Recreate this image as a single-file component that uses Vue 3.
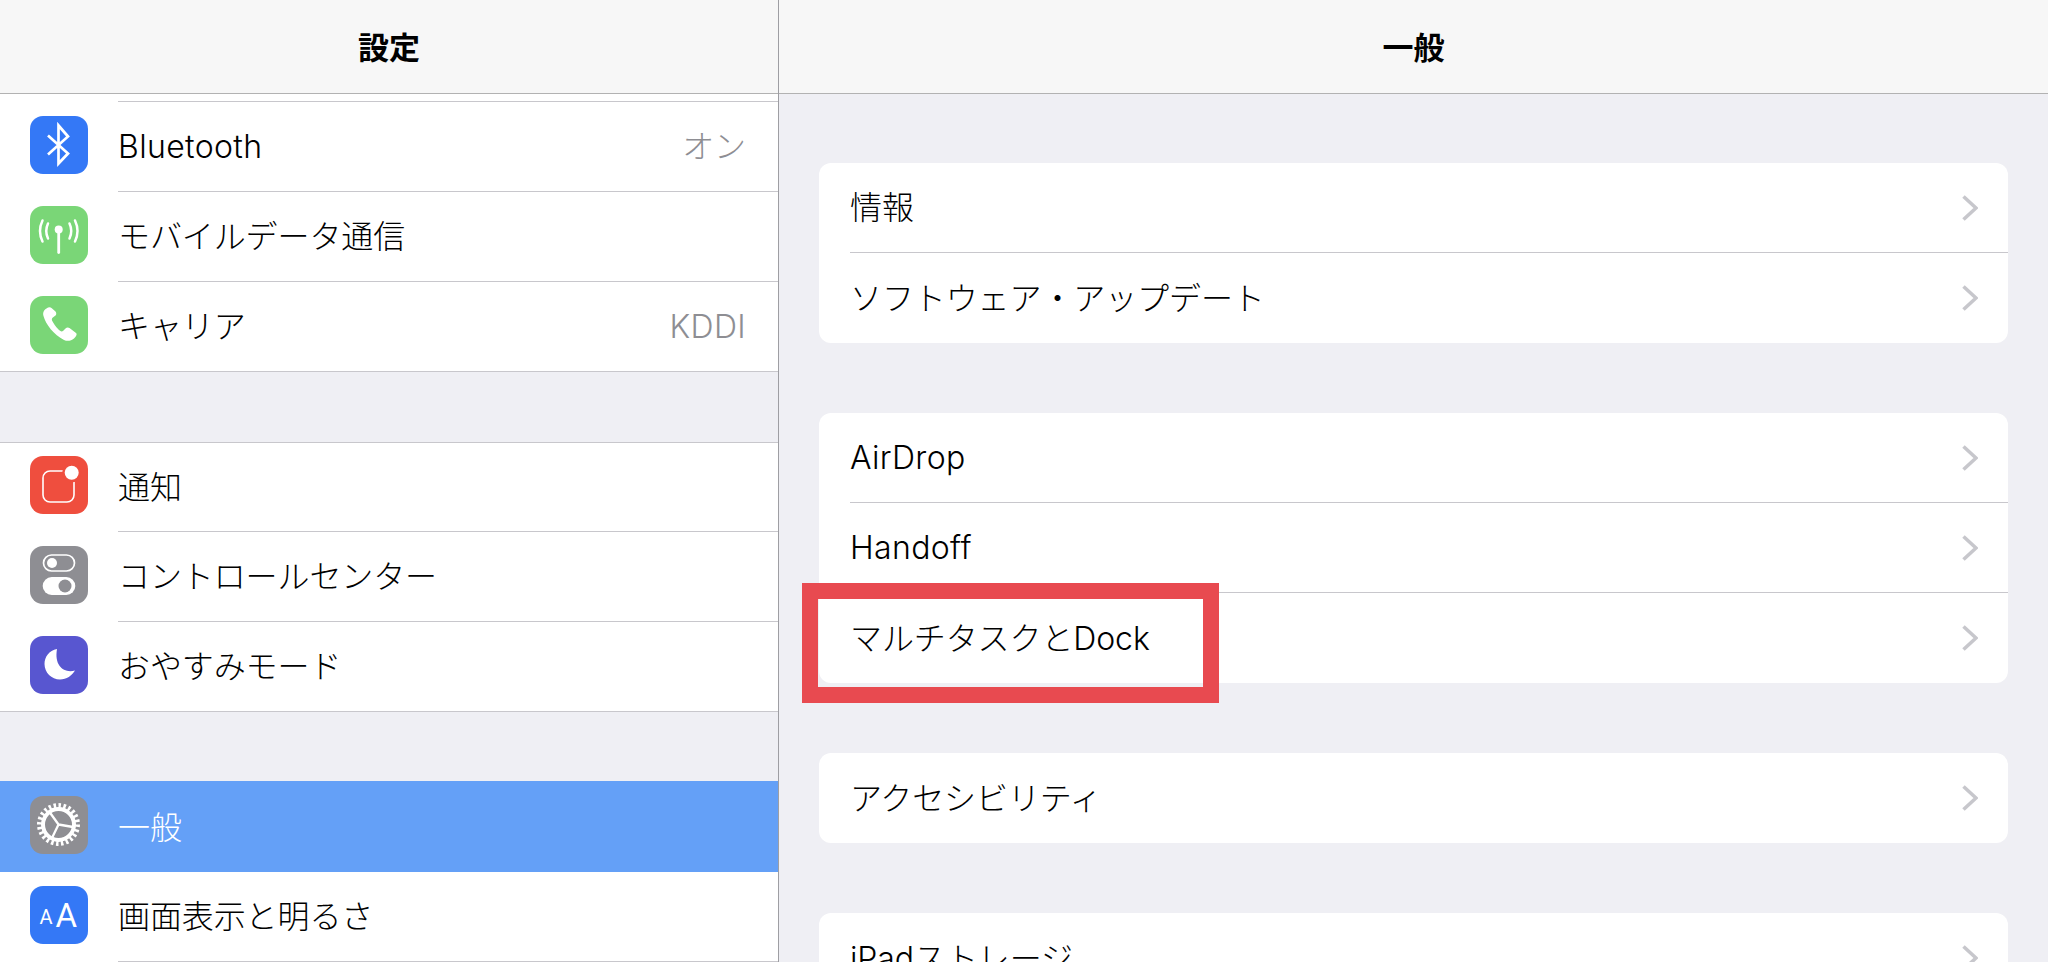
<template>
  <div class="screen">
    <aside class="side">
      <header class="nav">設定</header>
      <div class="stub"><div class="stub-line"></div></div>
      <section v-for="(group, g) in sideGroups" :key="g" class="group" :class="{ first: g === 0, middle: g === 1, last: g === 2 }">
        <div v-for="item in group" :key="item.label" class="side-row" :class="{ active: item.active }">
          <span class="app-icon" :style="{ background: item.color }">
            <svg viewBox="0 0 58 58" width="58" height="58">
              <path v-if="item.icon === 'bluetooth'" d="M18 19.5 L38 37.5 L28.5 47.5 V9.5 L38 20.5 L18 38.5" fill="none" stroke="#fff" stroke-width="2.7" stroke-linejoin="miter" />
              <g v-else-if="item.icon === 'antenna'" fill="none" stroke="#fff" stroke-width="2.5" stroke-linecap="round">
                <path d="M28.7 24 V46.5" stroke-width="2.8" />
                <circle cx="28.7" cy="23.5" r="4" fill="#fff" stroke="none" />
                <path d="M18 17.5 Q14.5 25 18 32.5" />
                <path d="M39.5 17.5 Q43 25 39.5 32.5" />
                <path d="M12.5 14.5 Q7.5 25 12.5 35.5" />
                <path d="M45 14.5 Q50 25 45 35.5" />
              </g>
              <path v-else-if="item.icon === 'phone'" fill="#fff" d="M16.5 12.5 C14 14 12.5 16.5 13.5 20 C15.5 28 24 39 34 44 C37.5 45.5 41 45 44 42.5 C46 40.5 47.5 38.5 46 37 L39.5 32 C38 31 36.5 31.5 35.5 32.5 L33 35 C31.5 36 30 35 28.5 33.5 C26 31 23.5 27.5 22 24.5 C21.5 23 22 22 23.5 21 L25.5 19.5 C26.5 18.5 26.5 17 25.5 15.5 L21.5 12 C20 10.8 18 11.5 16.5 12.5 Z" />
              <g v-else-if="item.icon === 'notify'">
                <rect x="13" y="15" width="31" height="31" rx="7" fill="none" stroke="#fff" stroke-width="1.6" />
                <circle cx="41.7" cy="16.7" r="9.5" fill="#ef4e3e" />
                <circle cx="41.7" cy="16.7" r="7" fill="#fff" />
              </g>
              <g v-else-if="item.icon === 'control'">
                <rect x="13.5" y="9" width="31" height="16" rx="8" fill="none" stroke="#fff" stroke-width="1.7" />
                <circle cx="22" cy="17" r="5" fill="#fff" />
                <rect x="12.7" y="31" width="32.6" height="18" rx="9" fill="#fff" />
                <circle cx="35" cy="40" r="6.5" fill="#8e8e93" />
              </g>
              <path v-else-if="item.icon === 'moon'" fill="#fff" d="M27 13 C19 14.5 14.5 21 14.5 28 C14.5 36.5 21.5 43.5 30 43.5 C36.5 43.5 42 39.5 45 34.5 C34 37.5 24 30 27 13 Z" />
              <g v-else-if="item.icon === 'gear'" fill="none" stroke="#fff">
                <circle cx="28.5" cy="28.5" r="19" stroke-width="5" pathLength="48" stroke-dasharray="1 1" />
                <circle cx="28.5" cy="28.5" r="15.5" stroke-width="4" />
                <path d="M28.5 28.5 L19.5 16 M28.5 28.5 L43 31 M28.5 28.5 L22 42" stroke-width="2.3" />
              </g>
              <g v-else-if="item.icon === 'text'" fill="#fff" class="aa">
                <text x="9.5" y="37.5" font-size="20">A</text>
                <text x="25.5" y="41" font-size="33">A</text>
              </g>
            </svg>
          </span>
          <div class="side-body">
            <span :class="labelClass(item.label)">{{ item.label }}</span>
            <span v-if="item.value" class="value" :class="labelClass(item.value)">{{ item.value }}</span>
          </div>
        </div>
      </section>
    </aside>
    <main class="detail">
      <header class="nav">一般</header>
      <div class="cards">
        <section v-for="(card, c) in cards" :key="c" class="card">
          <div v-for="label in card" :key="label" class="card-row">
            <div class="card-body">
              <span :class="labelClass(label)">{{ label }}</span>
              <svg class="chevron" viewBox="0 0 16 26" width="16" height="26">
                <path d="M1.5 1.5 L14 13 L1.5 24.5" fill="none" stroke="#c7c7cc" stroke-width="3.6" />
              </svg>
            </div>
            <div v-if="label === highlighted" class="marker"></div>
          </div>
        </section>
      </div>
    </main>
  </div>
</template>

<script setup>
const highlighted = "マルチタスクとDock";

const sideGroups = [
  [
    { label: "Bluetooth", value: "オン", icon: "bluetooth", color: "#3478f6" },
    { label: "モバイルデータ通信", icon: "antenna", color: "#7ad677" },
    { label: "キャリア", value: "KDDI", icon: "phone", color: "#7ad677" },
  ],
  [
    { label: "通知", icon: "notify", color: "#ef4e3e" },
    { label: "コントロールセンター", icon: "control", color: "#8e8e93" },
    { label: "おやすみモード", icon: "moon", color: "#5856d0" },
  ],
  [
    { label: "一般", icon: "gear", color: "#8e8e93", active: true },
    { label: "画面表示と明るさ", icon: "text", color: "#3478f6" },
  ],
];

const cards = [
  ["情報", "ソフトウェア・アップデート"],
  ["AirDrop", "Handoff", highlighted],
  ["アクセシビリティ"],
  ["iPadストレージ"],
];

// latin labels sit on a different baseline than the japanese ones
function labelClass(text) {
  return /^[\x00-\x7f]+$/.test(text) ? "latin" : "jp";
}
</script>

<style>
html,
body {
  margin: 0;
  overflow: hidden;
  background: #efeff4;
}
</style>

<style scoped>
.screen {
  display: flex;
  height: 962px;
  overflow: hidden;
  font-family: Inter, "Noto Sans CJK JP", sans-serif;
  font-size: 32px;
  color: #000;
  background: #efeff4;
}

.latin {
  letter-spacing: 0.35px;
  font-weight: 350;
}

.jp {
  letter-spacing: -0.1px;
  padding-bottom: 5px;
  font-weight: 300;
}

.side {
  width: 778px;
  flex: none;
  border-right: 1px solid #9e9ea3;
}

.detail {
  flex: 1;
  min-width: 0;
}

.nav {
  height: 93px;
  line-height: 96px;
  text-align: center;
  font-weight: 700;
  font-size: 31px;
  background: #f7f7f7;
  border-bottom: 1px solid #b2b2b2;
}

.stub {
  height: 8px;
  box-sizing: border-box;
  padding-left: 118px;
  background: #fff;
}

.stub-line {
  height: 8px;
  box-sizing: border-box;
  border-bottom: 1px solid #c8c7cc;
}

.group {
  background: #fff;
  border-top: 1px solid #c8c7cc;
  border-bottom: 1px solid #c8c7cc;
  margin-top: 69px;
}

.group.first {
  border-top: 0;
  margin-top: 0;
}

.group.middle {
  margin-top: 70px;
}

.group.last {
  border-top-color: #64a0f7;
  border-bottom: 0;
}

.side-row {
  display: flex;
  height: 90px;
}

.group > .side-row:last-child {
  height: 89px;
}

.group.middle > .side-row:first-child {
  height: 89px;
}

.group.last > .side-row:last-child {
  height: 90px;
}

.side-row.active {
  background: #64a0f7;
  color: #fff;
}

.app-icon {
  flex: none;
  width: 58px;
  height: 58px;
  margin: 14px 30px 0;
  border-radius: 13px;
  overflow: hidden;
}

.group.middle > .side-row:first-child .app-icon {
  margin-top: 13px;
}

.app-icon svg {
  display: block;
}

.aa text {
  font-family: Roboto, sans-serif;
  font-weight: 400;
}

.side-body {
  flex: 1;
  display: flex;
  align-items: center;
  justify-content: space-between;
  padding-right: 32px;
  border-bottom: 1px solid #c8c7cc;
}

.group > .side-row:last-child .side-body {
  border-bottom: 0;
}

.group.last > .side-row:last-child .side-body {
  border-bottom: 1px solid #c8c7cc;
}

.side-row.active .side-body {
  border-bottom: 0;
}

.value {
  color: #8e8e93;
}

.cards {
  display: flex;
  flex-direction: column;
  gap: 70px;
  padding: 69px 40px 0;
}

.card {
  background: #fff;
  border-radius: 12px;
}

.card-row {
  position: relative;
  height: 90px;
  padding-left: 31px;
  box-sizing: border-box;
}

.card-body {
  height: 100%;
  box-sizing: border-box;
  display: flex;
  align-items: center;
  justify-content: space-between;
  padding-right: 30px;
  border-bottom: 1px solid #c8c7cc;
}

.card-row:last-child .card-body {
  border-bottom: 0;
}

.chevron {
  flex: none;
}

.marker {
  position: absolute;
  left: -17px;
  top: -10px;
  width: 417px;
  height: 120px;
  box-sizing: border-box;
  border: 16px solid #e84a50;
}
</style>
